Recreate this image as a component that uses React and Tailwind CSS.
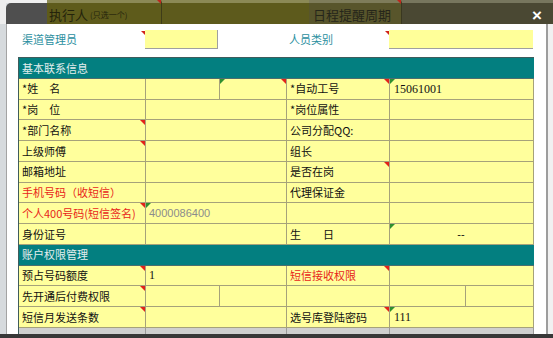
import React from "react";

const cjk = "font-['Noto_Sans_CJK_SC','Noto_Sans',sans-serif]";

function Tri({ color = "red", side = "right" }) {
  if (side === "left") {
    return (
      <span className="absolute top-0 left-0 w-0 h-0 border-t-[5px] border-r-[5px] border-t-[#2f8f2f] border-r-transparent" />
    );
  }
  return (
    <span
      className={
        color === "red"
          ? "absolute top-0 right-0 w-0 h-0 border-t-[5px] border-l-[5px] border-t-[#e2231a] border-l-transparent"
          : "absolute top-0 right-0 w-0 h-0 border-t-[5px] border-l-[5px] border-t-[#2f8f2f] border-l-transparent"
      }
    />
  );
}

function Cell({ children, className = "", red, green, tone = "text-[#111]" }) {
  return (
    <div
      className={`relative flex items-center border-r border-b border-[#a6a27a] bg-[#ffff9c] pl-[3px] whitespace-pre overflow-hidden text-[11px] ${tone} ${className}`}
    >
      {green && <Tri side="left" />}
      {red && <Tri />}
      {children}
    </div>
  );
}

function Section({ title }) {
  return (
    <div className="col-span-6 flex items-center bg-[#037f80] border-b border-[#4d6e6e] pl-[3px] text-[11px] text-[#e4eeee]">
      {title}
    </div>
  );
}

export default function App() {
  return (
    <div className={`w-[553px] h-[338px] overflow-hidden flex flex-col bg-[#dcdfe2] ${cjk}`}>
      {/* title bar, dimmed by the overlay */}
      <div className="h-[24px] flex shrink-0">
        <div className="w-[6px] bg-[#eeeeee]" />
        <div className="w-[41px] flex flex-col">
          <div className="h-[3px] bg-[#f0f0f0]" />
          <div className="flex-1 bg-[#4f4f4f] rounded-tl-[5px]" />
        </div>
        <div className="relative w-[115px] flex items-center border-t-[3px] border-[#8b8956] bg-[#5e5b1b] border-r border-r-[#3e3c18] pl-[2px] pt-[2px] text-[#24230b]">
          <span className="text-[13px]">执行人</span>
          <span className="text-[8px] ml-[2px]">(只选一个)</span>
          <span className="absolute -top-[3px] right-0 w-0 h-0 border-t-[4px] border-l-[4px] border-t-[#c0261c] border-l-transparent" />
        </div>
        <div className="w-[147px] border-t-[3px] border-[#8b8956] bg-[#5d5a1c]" />
        <div className="relative w-[93px] flex items-center border-t-[3px] border-[#7e7c5a] bg-[#58552b] border-r border-r-[#3a3820] pl-[4px] pt-[2px] text-[13px] text-[#26261a]">
          日程提醒周期
          <span className="absolute -top-[3px] right-0 w-0 h-0 border-t-[4px] border-l-[4px] border-t-[#c0261c] border-l-transparent" />
        </div>
        <div className="flex-1 flex items-center justify-end border-t-[3px] border-[#77765e] bg-[#4a4833] pr-[11px] pt-[3px]">
          <span className="text-[17px] font-bold leading-none text-white font-['Liberation_Sans',sans-serif]">×</span>
        </div>
      </div>

      <div className="flex-1 flex min-h-0">
        <div className="w-[6px] bg-[#d6dadd]" />
        {/* modal body */}
        <div className="w-[542px] bg-white border-l border-[#a3a3a3] border-r-2 border-r-[#9d9d9d] pl-[11px] pr-[12px] overflow-hidden">
          <div className="grid grid-cols-[127px_73px_68px_103px_144px] h-[33px] pt-[6px]">
            <div className="relative h-[19px] flex items-center pl-[4px] text-[11px] text-[#2b8fa0]">
              渠道管理员
              <span className="absolute top-[1px] right-0 w-0 h-0 border-t-[4px] border-l-[4px] border-t-[#d0231a] border-l-transparent" />
            </div>
            <div className="h-[19px] bg-[#ffff99] border-b border-r border-[#a0a0a0]" />
            <div />
            <div className="relative h-[19px] flex items-center pl-[3px] text-[11px] text-[#2b8fa0]">
              人员类别
              <span className="absolute top-[1px] right-0 w-0 h-0 border-t-[4px] border-l-[4px] border-t-[#d0231a] border-l-transparent" />
            </div>
            <div className="h-[19px] bg-[#ffff99] border-b border-[#a0a0a0]" />
          </div>

          <div className="grid grid-cols-[127px_74px_67px_103px_76px_68px] auto-rows-[20.75px] border-l border-t border-[#3f5c5c]">
            <Section title="基本联系信息" />

            <Cell>*姓　名</Cell>
            <Cell />
            <Cell className="bg-[#cdf5d3]" green red />
            <Cell red>*自动工号</Cell>
            <Cell className="col-span-2 pl-[4px] font-['Liberation_Serif',serif] text-[12px]" green>15061001</Cell>

            <Cell>*岗　位</Cell>
            <Cell className="col-span-2" />
            <Cell>*岗位属性</Cell>
            <Cell className="col-span-2" />

            <Cell red>*部门名称</Cell>
            <Cell className="col-span-2" />
            <Cell>公司分配QQ:</Cell>
            <Cell className="col-span-2" />

            <Cell red>上级师傅</Cell>
            <Cell className="col-span-2" />
            <Cell>组长</Cell>
            <Cell className="col-span-2" />

            <Cell>邮箱地址</Cell>
            <Cell className="col-span-2" />
            <Cell red>是否在岗</Cell>
            <Cell className="col-span-2" />

            <Cell tone="text-[#e8251a]">手机号码（收短信）</Cell>
            <Cell className="col-span-2" />
            <Cell>代理保证金</Cell>
            <Cell className="col-span-2" />

            <Cell red tone="text-[#e8251a]">个人400号码(短信签名)</Cell>
            <Cell className="col-span-2 pl-[2px] font-['Liberation_Sans',sans-serif]" tone="text-[#8c8c8c]" green>4000086400</Cell>
            <Cell />
            <Cell className="col-span-2" />

            <Cell>身份证号</Cell>
            <Cell className="col-span-2" />
            <Cell>生　　日</Cell>
            <Cell className="col-span-2 justify-center pl-0 pr-[4px] font-['Liberation_Sans',sans-serif]" green>--</Cell>

            <Section title="账户权限管理" />

            <Cell red>预占号码额度</Cell>
            <Cell className="col-span-2 font-['Liberation_Serif',serif] text-[12px]">1</Cell>
            <Cell red tone="text-[#e8251a]">短信接收权限</Cell>
            <Cell className="col-span-2" />

            <Cell red>先开通后付费权限</Cell>
            <Cell />
            <Cell />
            <Cell />
            <Cell />
            <Cell />

            <Cell red>短信月发送条数</Cell>
            <Cell className="col-span-2" />
            <Cell red>选号库登陆密码</Cell>
            <Cell className="col-span-2 pl-[4px] font-['Liberation_Serif',serif] text-[12px]" green>111</Cell>

            <div className="bg-[#cfcfcf] border-r border-[#9a9a9a]" />
            <div className="col-span-2 bg-[#cfcfcf] border-r border-[#9a9a9a]" />
            <div className="bg-[#cfcfcf] border-r border-[#9a9a9a]" />
            <div className="col-span-2 bg-[#cfcfcf] border-r border-[#9a9a9a]" />
          </div>
        </div>
        <div className="flex-1 bg-[#f1f1f1]" />
      </div>

      <div className="h-[4px] shrink-0 bg-[#383838]" />
    </div>
  );
}
